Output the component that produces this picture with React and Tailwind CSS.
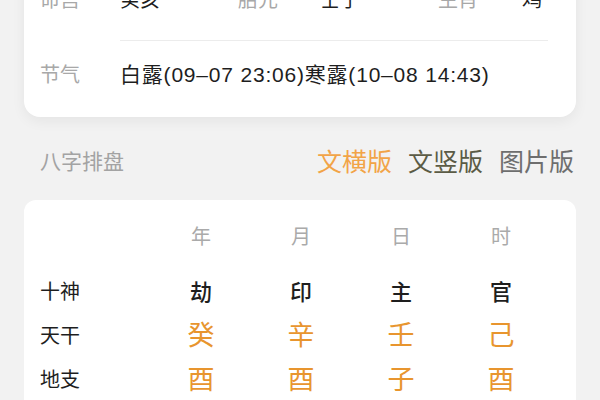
import React from 'react';

const topInfo = [
    { label: '命宫', value: '癸亥' },
    { label: '胎元', value: '壬子' },
    { label: '生肖', value: '鸡' },
];

const pillars = ['年', '月', '日', '时'];

const rows = [
    { label: '十神', cells: ['劫', '印', '主', '官'], kind: 'god' },
    { label: '天干', cells: ['癸', '辛', '壬', '己'], kind: 'stem' },
    { label: '地支', cells: ['酉', '酉', '子', '酉'], kind: 'stem' },
];

const App = () => {
    return (
        <div
            className="w-[600px] h-[400px] overflow-hidden bg-[#f2f2f2] px-[24px]"
            style={{ fontFamily: '"Liberation Sans", "Noto Sans CJK SC", sans-serif' }}
        >
            {/* info card (top cut off) */}
            <div className="mt-[-34px] bg-white rounded-[16px] shadow-[0_4px_14px_rgba(0,0,0,0.06)] pl-[16px] pr-[28px] pt-[20px]">
                <div className="grid grid-cols-[80px_118px_82px_118px_84px_1fr] leading-[28px] text-[20px] pb-[26px]">
                    {topInfo.map((item) => (
                        <React.Fragment key={item.label}>
                            <span className="text-[#a8a8a8]">{item.label}</span>
                            <span className="text-[#1e1e1e]">{item.value}</span>
                        </React.Fragment>
                    ))}
                </div>
                <div className="ml-[80px] border-t border-[#ececec]" />
                <div className="flex leading-[28px] text-[20px] pt-[20px] pb-[28px]">
                    <span className="w-[80px] text-[#a8a8a8]">节气</span>
                    <span className="text-[#1e1e1e] text-[21px] tracking-[0.8px]">白露(09–07 23:06)寒露(10–08 14:43)</span>
                </div>
            </div>

            {/* section header */}
            <div className="flex items-center justify-between pl-[16px] pr-[2px] mt-[30px] h-[30px]">
                <span className="text-[21px] text-[#a3a3a3]">八字排盘</span>
                <div className="flex gap-[16px] text-[25px] leading-[30px]">
                    <span className="text-[#f2a447]">文横版</span>
                    <span className="text-[#5b5b45]">文竖版</span>
                    <span className="text-[#6e6e6e]">图片版</span>
                </div>
            </div>

            {/* bazi card */}
            <div className="mt-[23px] bg-white rounded-[12px] pl-[16px] pt-[15px] pb-[20px]">
                <div className="grid grid-cols-[111px_100px_100px_100px_100px] h-[44px] items-center mb-[11px]">
                    <span />
                    {pillars.map((p) => (
                        <span key={p} className="text-center text-[20px] text-[#aaaaaa]">{p}</span>
                    ))}
                </div>
                {rows.map((row) => (
                    <div key={row.label} className="grid grid-cols-[111px_100px_100px_100px_100px] h-[44px] items-center">
                        <span className="text-[20px] text-[#1e1e1e]">{row.label}</span>
                        {row.cells.map((c, i) => (
                            <span
                                key={i}
                                className={
                                    row.kind === 'god'
                                        ? 'text-center text-[22px] font-medium text-[#1e1e1e]'
                                        : 'text-center text-[27px] text-[#e8952e]'
                                }
                            >
                                {c}
                            </span>
                        ))}
                    </div>
                ))}
            </div>
        </div>
    );
};

export default App;
